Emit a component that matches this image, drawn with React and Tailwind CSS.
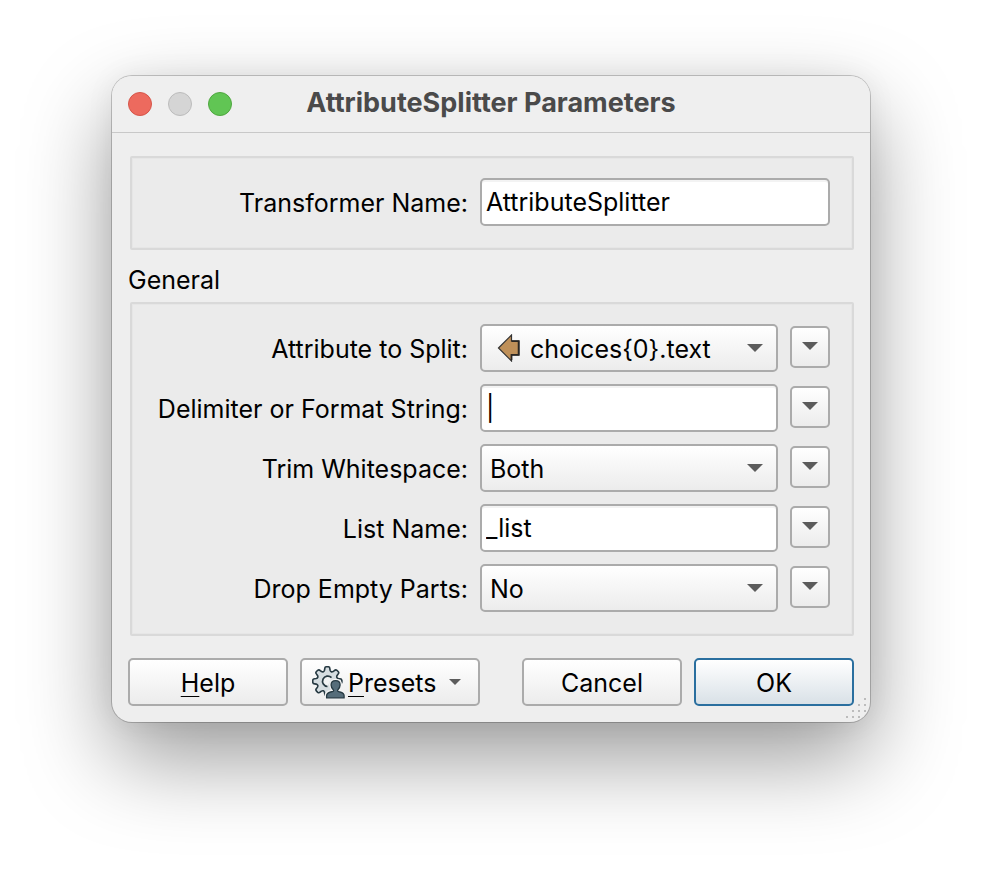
import React from "react";

const frame = "rounded-[5px] border-2 border-[#ababab]";
const raised = frame + " bg-linear-to-b from-white to-[#ececec]";
const group = "ml-0.5 flex flex-col gap-3 rounded-xs border-2 border-[#d9d9d9] bg-[#ebebeb] pt-5 pr-[22px] pb-[22px] pl-5 shadow-[inset_0_0_0_1px_#e6e6e6]";
const labelText = "w-[316px] shrink-0 pt-0.5 text-right whitespace-nowrap";

function Triangle({ className = "h-2 w-4" }) {
  return (
    <svg viewBox="0 0 16 8" className={className} aria-hidden="true">
      <path d="M0 0h16L8 8z" fill="#5c5c5c" />
    </svg>
  );
}

function AttributeArrow() {
  return (
    <svg viewBox="0 0 24 28" className="absolute top-2.5 left-4 h-7 w-6" aria-hidden="true">
      <path d="M2.500 14 15.500 1V7H23v14h-7.500v6z" fill="#bf9059" stroke="#333" strokeWidth="1.2" />
      <path d="M15.500 7.200H22.600V20.800H15.500V26" fill="none" stroke="#2b2723" strokeWidth="1.700" />
    </svg>
  );
}

const gearPath = (() => {
  const at = (angle, r) => `${(15.3 + r * Math.sin(angle)).toFixed(2)} ${(15.3 - r * Math.cos(angle)).toFixed(2)}`;
  let d = "";
  for (let i = 0; i < 8; i++) {
    const a = (i * Math.PI) / 4;
    d += `${i ? "Q" + at(a - Math.PI / 8, 9.4) + " " : "M"}${at(a - 0.25, 11.4)}`;
    d += `L${at(a - 0.2, 12.8)}Q${at(a - 0.18, 14.6)} ${at(a - 0.07, 14.6)}`;
    d += `L${at(a + 0.07, 14.6)}Q${at(a + 0.18, 14.6)} ${at(a + 0.2, 12.8)}L${at(a + 0.25, 11.4)}`;
  }
  return `${d}Q${at(-Math.PI / 8, 9.4)} ${at(-0.25, 11.4)}Z`;
})();

function PresetsIcon() {
  const person =
    "M14.600 31.800v-2c0-2 1.500-3.200 4-3.800l2.500-.6c.6-.2.7-.9.200-1.600-1.300-1.400-2.200-3-2.200-4.700 0-2.700 1.500-4.400 4.500-4.400s4.500 1.700 4.500 4.400c0 1.700-.9 3.300-2.200 4.700-.5.7-.4 1.400.200 1.600l2 .6c2.500.6 4 1.800 4 3.800v2z";
  return (
    <svg viewBox="0 0 33 33" className="h-[33px] w-[33px] shrink-0" aria-hidden="true">
      <path d={gearPath} fill="#d5dde1" stroke="#263942" strokeWidth="1.600" strokeLinejoin="round" />
      <path d="M19.500 11.700A5.200 5.200 0 1 0 15.500 20.500" fill="#f1f3f4" stroke="#263942" strokeWidth="1.700" />
      <path d={person} fill="#f4f4f4" stroke="#f4f4f4" strokeWidth="4" />
      <path d={person} fill="#566d7a" stroke="#263942" strokeWidth="1.300" />
    </svg>
  );
}

function Row({ id, label, children, menu = true }) {
  return (
    <div className="flex items-center gap-3">
      <label htmlFor={id} className={labelText}>{label}</label>
      <div className="relative min-w-0 flex-1">{children}</div>
      {menu && (
        <button
          type="button"
          aria-label={`${label} options`}
          className={`${raised} mt-0.5 flex h-[42px] w-10 shrink-0 justify-center self-start pt-3.5`}
        >
          <Triangle />
        </button>
      )}
    </div>
  );
}

function TextBox({ id, value }) {
  return (
    <input
      id={id}
      type="text"
      defaultValue={value}
      className={`${frame} block h-12 w-full bg-white px-1 shadow-[inset_0_2px_0_#f3f3f3] outline-none`}
    />
  );
}

function Choice({ id, options, icon }) {
  return (
    <>
      <select
        id={id}
        className={`${raised} block h-12 w-full appearance-none pt-0.5 pr-10 outline-none ${icon ? "pl-12" : "pl-2"}`}
      >
        {options.map((o) => (
          <option key={o}>{o}</option>
        ))}
      </select>
      {icon}
      <div className="pointer-events-none absolute inset-y-0 right-[15px] flex items-center">
        <Triangle />
      </div>
    </>
  );
}

function ResizeGrip() {
  const dots = [[18, 0], [12, 6], [18, 6], [6, 12], [12, 12], [18, 12], [0, 18], [6, 18], [12, 18]];
  return (
    <svg viewBox="0 0 20 20" className="absolute right-1 bottom-1 h-5 w-5" aria-hidden="true">
      {dots.map(([x, y]) => (
        <rect key={`${x}-${y}`} x={x} y={y} width="2" height="2" fill="#bcbcbc" />
      ))}
    </svg>
  );
}

export default function App() {
  return (
    <div className="min-h-screen overflow-hidden bg-white px-28 pt-[76px] pb-20 font-['Inter','Liberation_Sans',sans-serif] text-[25px] leading-8 text-black">
      <main className="relative rounded-[20px] bg-[#eeeeee] shadow-[0_0_0_1px_rgba(0,0,0,0.2),0_36px_88px_rgba(0,0,0,0.4),0_0_30px_rgba(0,0,0,0.06)]">
        <header className="relative flex h-[57px] items-center justify-center rounded-t-[20px] border-b border-[#c8c8c8] bg-[#efefef]">
          <div className="absolute left-4 flex gap-4">
            <button type="button" aria-label="Close" className="size-6 rounded-full border border-[#d65549] bg-[#ed6a5e]" />
            <button type="button" aria-label="Minimize" className="size-6 rounded-full border border-[#bcbcbc] bg-[#d5d5d5]" />
            <button type="button" aria-label="Zoom" className="size-6 rounded-full border border-[#4fa73f] bg-[#61c554]" />
          </div>
          <h1 className="pb-0.5 text-[27px] font-bold text-[#4a4a4a]">AttributeSplitter Parameters</h1>
        </header>

        <form className="px-4 pt-[23px] pb-4" onSubmit={(e) => e.preventDefault()}>
          <div className={group}>
            <Row id="name" label="Transformer Name:" menu={false}>
              <TextBox id="name" value="AttributeSplitter" />
            </Row>
          </div>

          <h2 className="pt-3.5 pb-1.5">General</h2>

          <div className={group}>
            <Row id="attribute" label="Attribute to Split:">
              <Choice id="attribute" options={["choices{0}.text"]} icon={<AttributeArrow />} />
            </Row>
            <Row id="delimiter" label="Delimiter or Format String:">
              <TextBox id="delimiter" value="|" />
            </Row>
            <Row id="trim" label="Trim Whitespace:">
              <Choice id="trim" options={["Both", "Left", "Right", "None"]} />
            </Row>
            <Row id="list" label="List Name:">
              <TextBox id="list" value="_list" />
            </Row>
            <Row id="drop" label="Drop Empty Parts:">
              <Choice id="drop" options={["No", "Yes"]} />
            </Row>
          </div>

          <div className="mt-[22px] flex gap-3">
            <button type="button" className={`${raised} h-12 w-40 pt-0.5`}>
              <span className="underline decoration-1 underline-offset-4">H</span>elp
            </button>
            <button type="button" className={`${raised} flex h-12 w-[180px] items-center gap-[3px] pl-2.5`}>
              <PresetsIcon />
              <span className="pt-0.5"><span className="underline decoration-1 underline-offset-4">P</span>resets</span>
              <Triangle className="ml-2.5 h-1.5 w-3" />
            </button>
            <button type="button" className={`${raised} ml-auto h-12 w-40 pt-0.5`}>Cancel</button>
            <button
              type="submit"
              className="h-12 w-40 rounded-[5px] border-2 border-[#2a6f9f] bg-linear-to-b from-white to-[#d9e1e7] pt-0.5"
            >
              OK
            </button>
          </div>
        </form>
        <ResizeGrip />
      </main>
    </div>
  );
}
